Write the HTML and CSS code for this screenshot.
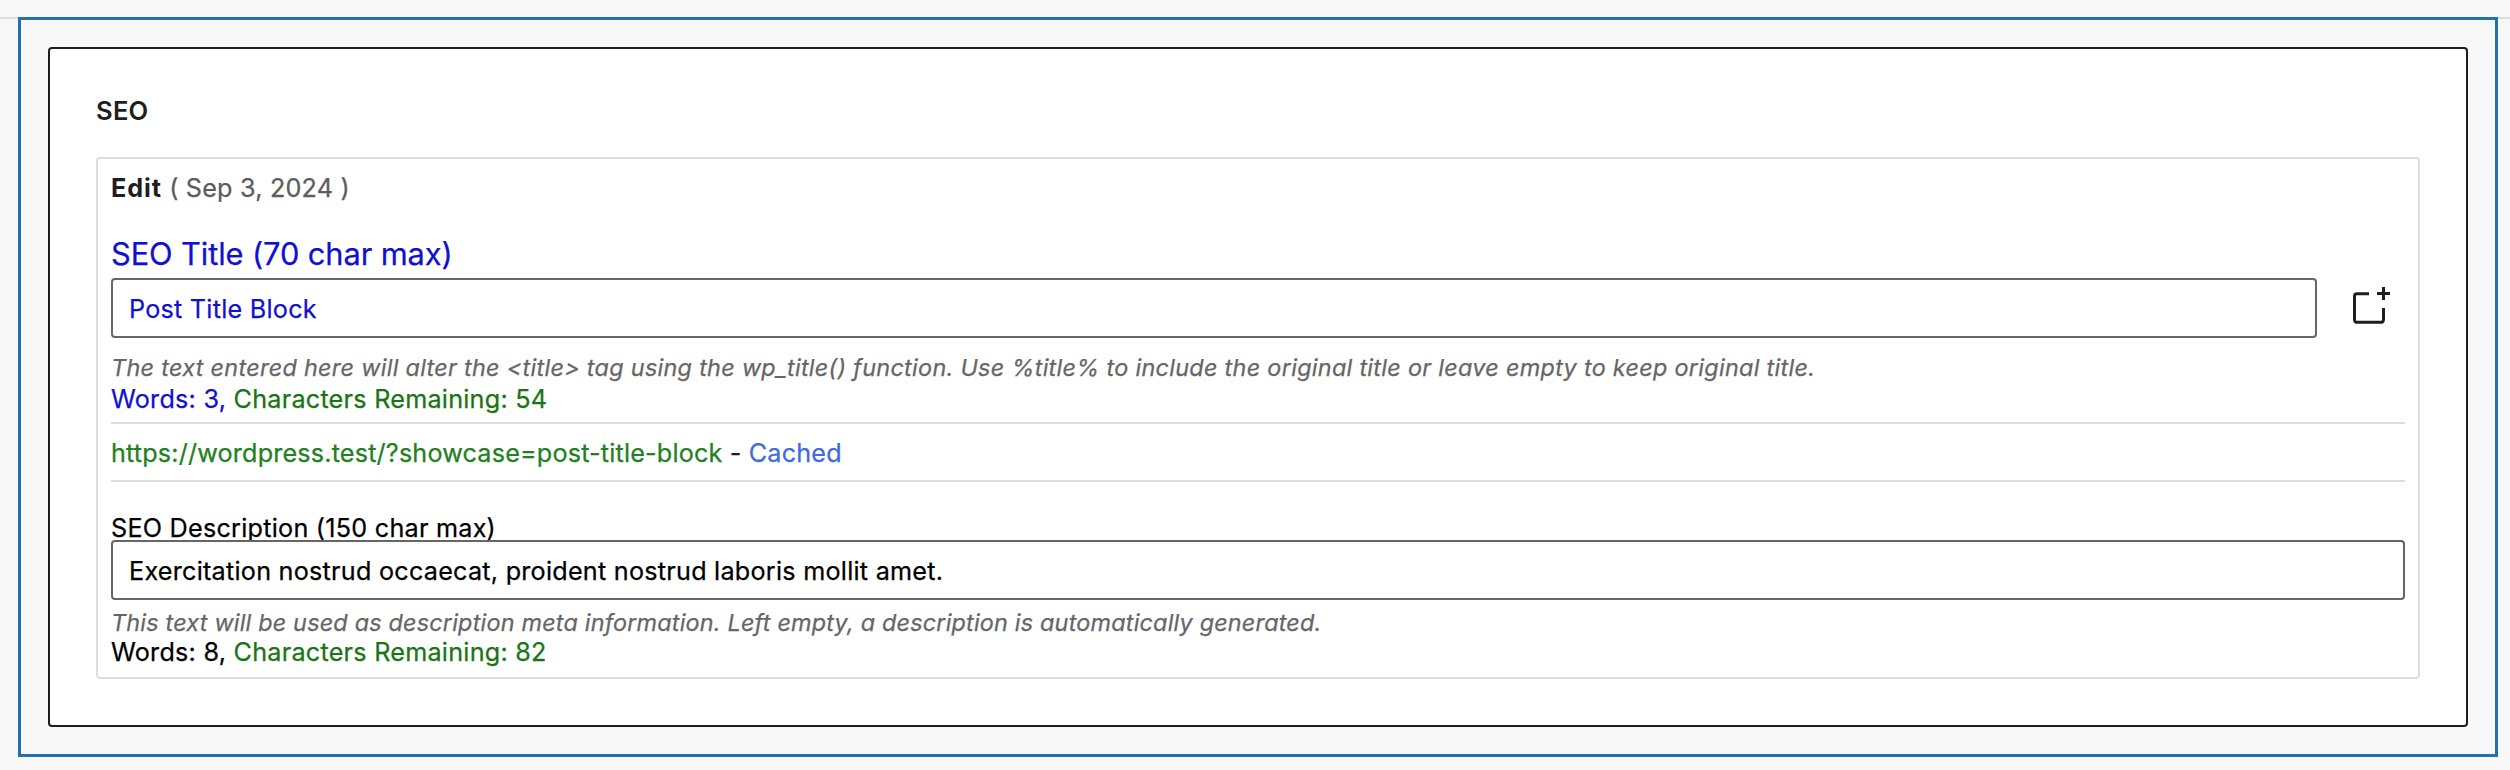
FILE: index.html
```html
<!DOCTYPE html>
<html lang="en">
<head>
<meta charset="utf-8">
<title>SEO</title>
<link rel="stylesheet" href="styles.css">
</head>
<body>
<main class="editor">
  <section class="block">
    <div class="card">
      <h2 class="card-title">SEO</h2>
      <div class="panel">
        <div class="meta"><strong>Edit</strong> <span class="date">( Sep 3, 2024 )</span></div>
        <label class="title-label">SEO Title (70 char max)</label>
        <div class="title-row">
          <div class="field field-title">Post Title Block</div>
          <svg class="add-icon" viewBox="0 0 48 48" fill="none" stroke="#1e1e1e" stroke-width="3"><path d="M22 11.7H10a2.5 2.5 0 0 0-2.5 2.5v23.6a2.5 2.5 0 0 0 2.5 2.5h24a2.5 2.5 0 0 0 2.5-2.5V26M36.5 5v13M30 11.5h13"/></svg>
        </div>
        <p class="help help-title">The text entered here will alter the &lt;title&gt; tag using the wp_title() function. Use %title% to include the original title or leave empty to keep original title.</p>
        <p class="count blue">Words: 3, <span class="green">Characters Remaining: 54</span></p>
        <div class="url"><span class="link">https://wordpress.test/?showcase=post-title-block</span> <span>-</span> <span class="cached">Cached</span></div>
        <label class="desc-label">SEO Description (150 char max)</label>
        <div class="field">Exercitation nostrud occaecat, proident nostrud laboris mollit amet.</div>
        <p class="help help-desc">This text will be used as description meta information. Left empty, a description is automatically generated.</p>
        <p class="count">Words: 8, <span class="green">Characters Remaining: 82</span></p>
      </div>
    </div>
  </section>
</main>
</body>
</html>
```
FILE: styles.css
```css
* { box-sizing: border-box; }
body {
  margin: 0;
  background: #f8f8f8;
  color: #1e1e1e;
  font-family: Inter, "Liberation Sans", sans-serif;
  font-size: 25.2px;
  letter-spacing: 0.24px;
}
p, h2 { margin: 0; }
.editor {
  height: 770px;
  padding: 17px 12px 0 18px;
  background: linear-gradient(#ddd, #ddd) 0 17px / 100% 2px no-repeat;
}
.block {
  height: 740px;
  padding: 27px;
  border: 3px solid #2271b1;
  background: #f8f8f8;
}
.card {
  height: 680px;
  padding: 0 46px;
  border: 2px solid #1e1e1e;
  border-radius: 4px;
  background: #fff;
}
.card-title {
  padding-top: 36px;
  height: 108px;
  font-size: 25.6px;
  font-weight: 600;
  line-height: 52px;
}
.panel {
  height: 522px;
  padding: 0 13px;
  border: 2px solid #ddd;
  border-radius: 4px;
}
.meta { line-height: 58px; }
.meta strong { font-weight: 700; letter-spacing: 0.9px; }
.date { color: #5c5c5c; letter-spacing: 0.2px; }
.title-label {
  display: block;
  margin-top: 12px;
  font-size: 30.8px;
  letter-spacing: -0.1px;
  line-height: 49px;
  color: #11c;
}
.title-row {
  display: flex;
  align-items: flex-start;
  gap: 30px;
}
.field {
  position: relative;
  height: 60px;
  padding: 1px 16px;
  border: 2px solid #666;
  border-radius: 4px;
  background: #fff;
  line-height: 56px;
  color: #000;
}
.field-title { flex: 0 0 2206px; color: #11c; }
.add-icon { width: 48px; height: 48px; margin-top: 4px; flex: none; }
.help { color: #666; font-size: 23.4px; font-style: italic; white-space: nowrap; }
.help-title { margin-top: 12px; line-height: 36px; letter-spacing: 0.3px; }
.help-desc { margin-top: 7px; line-height: 32px; letter-spacing: 0.2px; }
.count { line-height: 26px; color: #000; }
.blue { color: #11c; }
.green { color: #1a7414; }
.url {
  height: 60px;
  margin-top: 10px;
  padding-top: 2px;
  border: solid #ddd;
  border-width: 2px 0;
  line-height: 54px;
  letter-spacing: 0.17px;
}
.link { color: #228022; }
.cached { color: #4169e1; }
.desc-label {
  display: block;
  margin: 33px 0 -1px;
  line-height: 26px;
  color: #000;
}
.title-label, .field, .help, .count, .url, .desc-label, .date { -webkit-text-stroke: 0.25px currentColor; }
```
